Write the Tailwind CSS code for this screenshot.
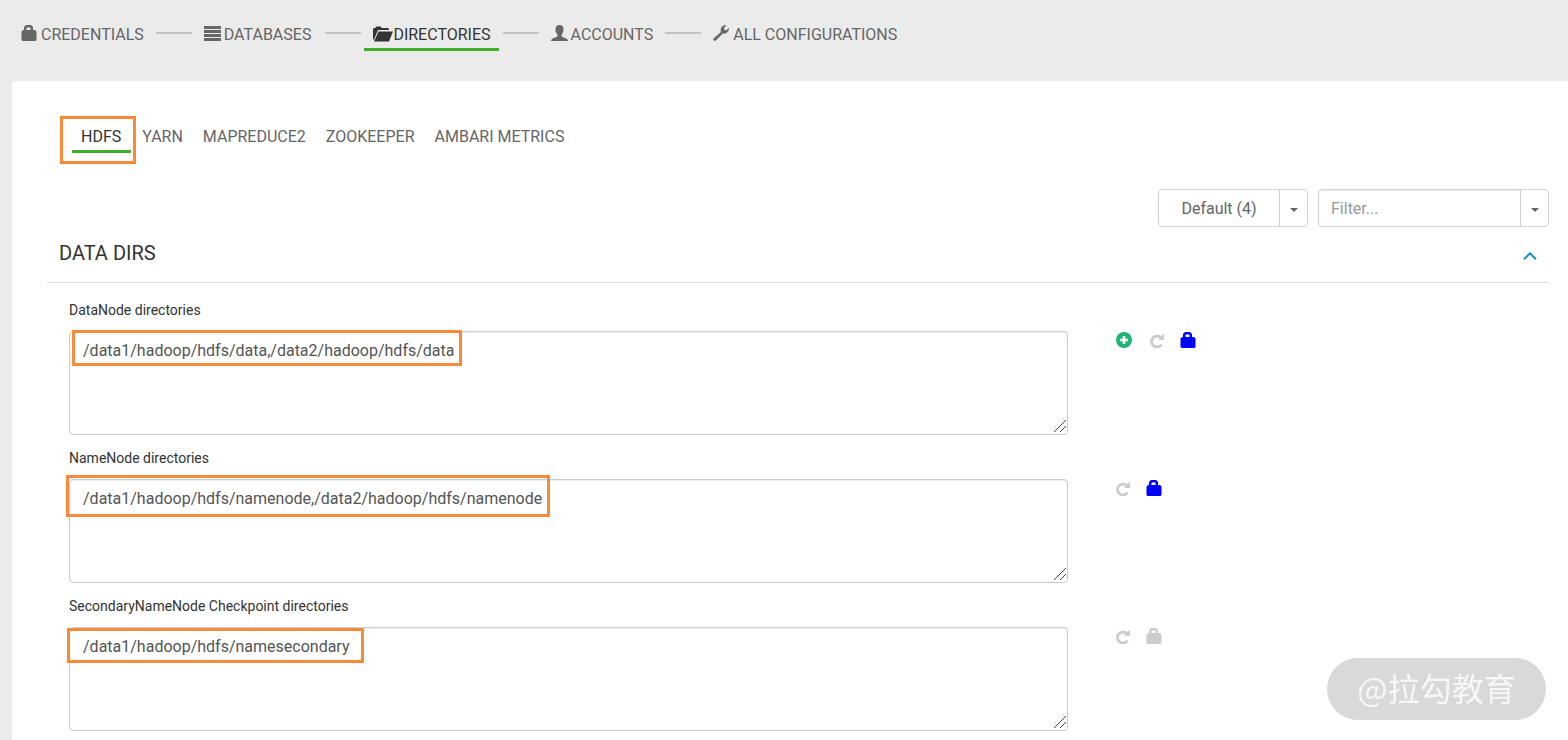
<!DOCTYPE html>
<html lang="en">
<head>
<meta charset="utf-8">
<title>Cluster configuration - Directories</title>
<script src="https://cdn.jsdelivr.net/npm/@tailwindcss/browser@4"></script>
</head>
<body class="min-h-screen overflow-hidden bg-[#ebebeb] font-['Roboto',sans-serif] text-base text-[#666]">
<svg class="hidden" aria-hidden="true">
  <symbol id="lock" viewBox="0 0 16 16"><path fill="currentColor" fill-rule="evenodd" d="M5 0h5l2 2v3h2l1.500 1.500V15l-1 1h-13L0.500 15V6.500L2 5h1V2zM5.500 2.500V5h4V2.500z"/></symbol>
  <symbol id="repeat" viewBox="0 0 14 14"><path fill="none" stroke="currentColor" stroke-width="2.800" d="M11.500 10.600A5.500 5.500 0 1 1 10.500 3.300"/><path fill="currentColor" d="M14 0v6H8l2-2-1.200-1.200L11.500 1.500 12.500 1z"/></symbol>
  <symbol id="caret" viewBox="0 0 8 4"><path fill="currentColor" d="M0 0h8L4 4z"/></symbol>
  <symbol id="grip" viewBox="0 0 14 14"><path fill="#fff" d="M0 0h14v14H0z"/><path fill="none" stroke="#444" d="M1 13 13 1M7 13l6-6"/></symbol>
</svg>

<nav aria-label="Wizard steps" class="pt-[17px] pl-3">
  <ol class="flex h-16 items-start whitespace-nowrap leading-[27px]">
    <li><a href="#" class="flex items-center border-b-3 border-transparent pt-1 pr-2 pl-[9px]"><span class="w-5"><svg class="mb-1 size-4"><use href="#lock"/></svg></span>CREDENTIALS</a></li>
    <li aria-hidden="true" class="mt-[15px] mr-[3px] ml-1 h-0.5 w-9 bg-[#c4c4c4]"></li>
    <li><a href="#" class="flex items-center border-b-3 border-transparent pt-1 pr-2.5 pl-[9px]"><span class="w-5"><svg class="mb-0.5 h-4 w-[17px]" viewBox="0 0 17 16"><path fill="currentColor" d="M0 0h17v3H0zM0 4h17v3H0zM0 8h17v3H0zM0 12h17v3H0z"/></svg></span>DATABASES</a></li>
    <li aria-hidden="true" class="mt-[15px] mr-[3px] ml-1 h-0.5 w-9 bg-[#c4c4c4]"></li>
    <li><a href="#" aria-current="step" class="flex items-center border-b-3 border-[#3fae2a] pt-1 pr-2 pl-[9px] text-[#333]"><span class="w-5"><svg class="mb-0.5 h-4 w-5" viewBox="0 0 20 16"><path fill="currentColor" d="M0 14V3l1-1h1l1.500-1.500h4L9 2h6l1 1v1H5L1 13.500zM5.500 5.500H20L16 15.500H1z"/></svg></span>DIRECTORIES</a></li>
    <li aria-hidden="true" class="mt-[15px] mr-[3px] ml-1 h-0.5 w-9 bg-[#c4c4c4]"></li>
    <li><a href="#" class="flex items-center border-b-3 border-transparent pt-1 pr-2 pl-[9px]"><span class="w-5"><svg class="mb-1 h-4 w-[17px]" viewBox="0 0 17 16"><path fill="currentColor" d="M8.500 0C6 0 4.500 1.500 4.500 4l.2 1.500c-.4.800 0 1.800.6 2.200.3 1 .8 1.700 1.200 2.200v1.300c-.5.800-5 2-6 3.200L0 16h17l-.5-1.600c-1-1.200-5.500-2.400-6-3.200V9.900c.4-.5.900-1.200 1.200-2.200.6-.4 1-1.400.6-2.200l.2-1.500c0-2.500-1.500-4-4-4z"/></svg></span>ACCOUNTS</a></li>
    <li aria-hidden="true" class="mt-[15px] mr-[3px] ml-1 h-0.5 w-9 bg-[#c4c4c4]"></li>
    <li><a href="#" class="flex items-center border-b-3 border-transparent pt-1 pr-2 pl-[9px]"><span class="w-5"><svg class="mb-1 size-4" viewBox="0 0 16 16"><path fill="currentColor" d="M.5 13.500 8 7C7 4 8.500 1 11.500.2l2 .1L11 3l.5 2 2 .3L16 2.700c.3 4-2.800 6.600-6.200 5.800L2.500 15.800H1.300L.3 14.800z"/></svg></span>ALL CONFIGURATIONS</a></li>
  </ol>
</nav>

<main class="ml-3 min-h-[660px] rounded-tl bg-white pt-10 pr-[19px] pl-[35px]">
  <nav aria-label="Services" class="flex gap-0.5 pl-[25px] leading-[27px]">
    <a href="#" aria-current="page" class="relative border-b-3 border-[#3fae2a] pt-0.5 pr-2.5 pl-[9px] text-[#333]">HDFS<span class="pointer-events-none absolute -top-[5px] -right-[5px] -bottom-[14px] -left-3 border-3 border-[#f88a3a]"></span></a>
    <a href="#" class="border-b-3 border-transparent px-[9px] pt-0.5">YARN</a>
    <a href="#" class="border-b-3 border-transparent px-[9px] pt-0.5">MAPREDUCE2</a>
    <a href="#" class="border-b-3 border-transparent px-[9px] pt-0.5">ZOOKEEPER</a>
    <a href="#" class="border-b-3 border-transparent px-[9px] pt-0.5">AMBARI METRICS</a>
  </nav>

  <div class="mt-9 flex justify-end gap-2.5">
    <div class="flex h-[38px] w-[150px] rounded border border-[#cfd3d7]">
      <button class="flex-1 pt-0.5">Default (4)</button>
      <button aria-label="Choose config group" class="flex w-7 items-center justify-center border-l border-[#cfd3d7] pt-1"><svg class="h-1 w-2"><use href="#caret"/></svg></button>
    </div>
    <div class="flex h-[38px] w-[231px] rounded border border-[#cfd3d7]">
      <input aria-label="Filter" placeholder="Filter..." class="min-w-0 flex-1 rounded-l px-3 pt-0.5 shadow-[inset_0_1px_1px_rgba(0,0,0,0.075)] placeholder:text-[#999]">
      <button aria-label="Filter options" class="flex w-7 items-center justify-center border-l border-[#cfd3d7] pt-1"><svg class="h-1 w-2"><use href="#caret"/></svg></button>
    </div>
  </div>

  <section>
    <header class="flex h-14 items-center justify-between border-b border-[#ddd] pr-3 pl-3">
      <h2 class="-mt-1 text-xl text-[#333]">DATA DIRS</h2>
      <button aria-label="Collapse section" class="pt-0.5 text-[#1491c1]"><svg class="h-2 w-3.5" viewBox="0 0 14 8"><path fill="none" stroke="currentColor" stroke-width="2" d="M1 7.300 7 1.300l6 6"/></svg></button>
    </header>

    <div class="flex flex-col gap-[13px] pt-[17px] pl-[22px]">
      <div class="grid grid-cols-[minmax(0,1fr)_433px] gap-x-12">
        <label for="datanode" class="col-span-2 mb-[11px] text-sm leading-5 text-[#333]">DataNode directories</label>
        <div class="relative">
          <textarea id="datanode" class="block h-[104px] w-full resize rounded border border-[#ccc] px-[13px] py-[7px] leading-6 text-[#555] shadow-[inset_0_1px_1px_rgba(0,0,0,0.075)]">/data1/hadoop/hdfs/data,/data2/hadoop/hdfs/data</textarea>
          <svg class="pointer-events-none absolute right-px bottom-0.5 size-3.5"><use href="#grip"/></svg>
          <span class="pointer-events-none absolute -top-px left-[3px] h-9 w-[390px] border-3 border-[#f88a3a]"></span>
        </div>
        <div class="flex h-[17px] items-end gap-4 text-[#ccc]">
          <button aria-label="Add" class="mr-0.5 text-[#1eb475]"><svg class="size-4" viewBox="0 0 16 16"><circle cx="8" cy="8" r="8" fill="currentColor"/><path fill="#fff" d="M6.700 4h2.600v2.700H12v2.600H9.300V12H6.700V9.300H4V6.700h2.700z"/></svg></button>
          <button aria-label="Restore"><svg class="size-3.5"><use href="#repeat"/></svg></button>
          <button aria-label="Final" class="text-[#0000ff]"><svg class="size-4"><use href="#lock"/></svg></button>
        </div>
      </div>

      <div class="grid grid-cols-[minmax(0,1fr)_433px] gap-x-12">
        <label for="namenode" class="col-span-2 mb-[11px] text-sm leading-5 text-[#333]">NameNode directories</label>
        <div class="relative">
          <textarea id="namenode" class="block h-[104px] w-full resize rounded border border-[#ccc] px-[13px] py-[7px] leading-6 text-[#555] shadow-[inset_0_1px_1px_rgba(0,0,0,0.075)]">/data1/hadoop/hdfs/namenode,/data2/hadoop/hdfs/namenode</textarea>
          <svg class="pointer-events-none absolute right-px bottom-0.5 size-3.5"><use href="#grip"/></svg>
          <span class="pointer-events-none absolute -top-1 -left-[3px] h-[42px] w-[484px] border-3 border-[#f88a3a]"></span>
        </div>
        <div class="flex h-[17px] items-end gap-4 text-[#ccc]">
          <button aria-label="Restore"><svg class="size-3.5"><use href="#repeat"/></svg></button>
          <button aria-label="Final" class="text-[#0000ff]"><svg class="size-4"><use href="#lock"/></svg></button>
        </div>
      </div>

      <div class="grid grid-cols-[minmax(0,1fr)_433px] gap-x-12">
        <label for="secondary" class="col-span-2 mb-[11px] text-sm leading-5 text-[#333]">SecondaryNameNode Checkpoint directories</label>
        <div class="relative">
          <textarea id="secondary" class="block h-[104px] w-full resize rounded border border-[#ccc] px-[13px] py-[7px] leading-6 text-[#555] shadow-[inset_0_1px_1px_rgba(0,0,0,0.075)]">/data1/hadoop/hdfs/namesecondary</textarea>
          <svg class="pointer-events-none absolute right-px bottom-0.5 size-3.5"><use href="#grip"/></svg>
          <span class="pointer-events-none absolute top-px -left-0.5 h-[35px] w-[297px] border-3 border-[#f88a3a]"></span>
        </div>
        <div class="flex h-[17px] items-end gap-4 text-[#ccc]">
          <button aria-label="Restore"><svg class="size-3.5"><use href="#repeat"/></svg></button>
          <button aria-label="Final"><svg class="size-4"><use href="#lock"/></svg></button>
        </div>
      </div>
    </div>
  </section>
</main>

<div lang="zh" class="pointer-events-none fixed right-[22px] bottom-5 flex h-[62px] w-[219px] items-center justify-center rounded-full bg-[#d9d9d9] pb-1 font-['Noto_Sans_CJK_SC',sans-serif] text-[32px] text-[#f7f7f7]">@拉勾教育</div>
</body>
</html>
